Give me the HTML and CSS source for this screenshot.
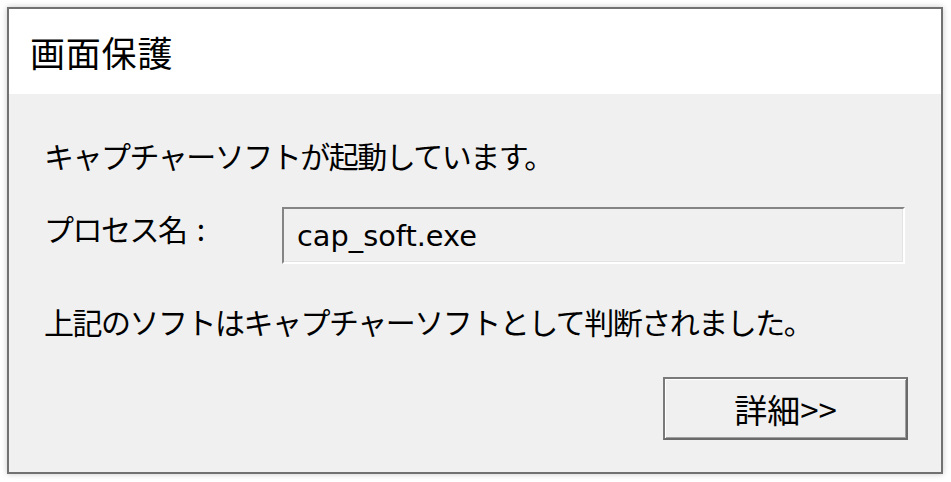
FILE: index.html
```html
<!DOCTYPE html>
<html lang="ja">
<head>
<meta charset="utf-8">
<title>画面保護</title>
<link rel="stylesheet" href="styles.css">
</head>
<body>
<div class="window">
  <div class="titlebar"><span class="title">画面保護</span></div>
  <div class="content">
    <p class="msg msg-top">キャプチャーソフトが起動しています。</p>
    <div class="row">
      <span class="label">プロセス名<span class="colon"> :</span></span>
      <div class="field">cap_soft.exe</div>
    </div>
    <p class="msg msg-bottom">上記のソフトはキャプチャーソフトとして判断されました。</p>
    <div class="actions"><button class="btn" type="button">詳細&gt;&gt;</button></div>
  </div>
</div>
</body>
</html>
```

FILE: styles.css
```css
* { box-sizing: border-box; }
html, body { margin: 0; padding: 0; }
body {
  background: #ffffff;
  width: 951px;
  height: 482px;
  overflow: hidden;
  padding: 7px 0 0 7px;
  font-family: "Noto Sans CJK JP", "Noto Sans", sans-serif;
  color: #000;
}
.window {
  width: 936px;
  height: 467px;
  border: 2px solid #717171;
  background: #f0f0f0;
  box-shadow: 0 0 6px rgba(0, 0, 0, 0.22);
  display: flex;
  flex-direction: column;
}
.titlebar {
  height: 85px;
  background: #ffffff;
  display: flex;
  align-items: center;
  padding-left: 21px;
}
.title {
  font-size: 35px;
  line-height: 40px;
  letter-spacing: 0.8px;
}
.content {
  flex: 1;
  padding: 0 33px 0 35px;
  display: flex;
  flex-direction: column;
}
.msg {
  margin: 0;
  font-size: 30px;
  letter-spacing: -1.5px;
  line-height: 40px;
  white-space: nowrap;
}
.msg-top { margin-top: 41px; }
.row {
  margin-top: 32px;
  display: flex;
  align-items: flex-start;
}
.label {
  width: 238px;
  font-size: 30px;
  letter-spacing: -1.5px;
  line-height: 40px;
  margin-top: 1px;
  white-space: nowrap;
}
.colon {
  letter-spacing: 3.5px;
}
.field {
  width: 623px;
  height: 57px;
  border-style: solid;
  border-width: 2px;
  border-color: #858585 #ffffff #ffffff #858585;
  box-shadow: inset -1px -1px 0 #e3e3e3;
  padding-left: 13px;
  display: flex;
  align-items: center;
  font-family: "DejaVu Sans", sans-serif;
  font-size: 28.8px;
  line-height: 40px;
}
.msg-bottom { margin-top: 37px; }
.actions {
  margin-top: 36px;
  display: flex;
  justify-content: flex-end;
}
.btn {
  width: 245px;
  height: 63px;
  background: #f0f0f0;
  border: 2px solid #7a7a7a;
  border-right-color: #6a6a6a;
  border-bottom-color: #6a6a6a;
  box-shadow: inset 1px 1px 0 #ffffff, inset -1px -1px 0 #a0a0a0;
  font-family: "Noto Sans CJK JP", sans-serif;
  font-size: 33px;
  line-height: 40px;
  color: #000;
  padding: 0;
  margin: 0;
}
```
